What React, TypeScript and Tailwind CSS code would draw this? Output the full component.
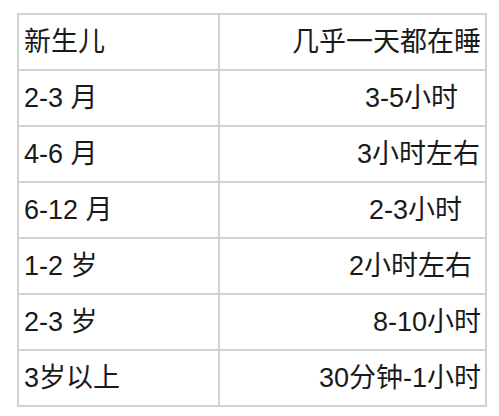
const rows = [
  { age: "新生儿", sleep: "几乎一天都在睡", pad: "pr-[4px]" },
  { age: "2-3 月", sleep: "3-5小时", pad: "pr-[27px]" },
  { age: "4-6 月", sleep: "3小时左右", pad: "pr-[5px]" },
  { age: "6-12 月", sleep: "2-3小时", pad: "pr-[23px]" },
  { age: "1-2 岁", sleep: "2小时左右", pad: "pr-[13px]" },
  { age: "2-3 岁", sleep: "8-10小时", pad: "pr-[4px]" },
  { age: "3岁以上", sleep: "30分钟-1小时", pad: "pr-[4px]" },
];

export default function App() {
  return (
    <div className="w-[499px] h-[416px] bg-white pt-[13px] pl-[17px] font-['Liberation_Sans','Noto_Sans_CJK_SC',sans-serif] text-[27px] text-[#1a1a1a]">
      <table className="border-collapse w-[470px] table-fixed">
        <tbody>
          {rows.map((r) => (
            <tr key={r.age} className="h-[56px]">
              <td className="w-[201px] border-2 border-[#d2d2d2] pl-[5px] align-middle leading-none">{r.age}</td>
              <td className={`border-2 border-[#d2d2d2] text-right align-middle leading-none ${r.pad}`}>{r.sleep}</td>
            </tr>
          ))}
        </tbody>
      </table>
    </div>
  );
}
